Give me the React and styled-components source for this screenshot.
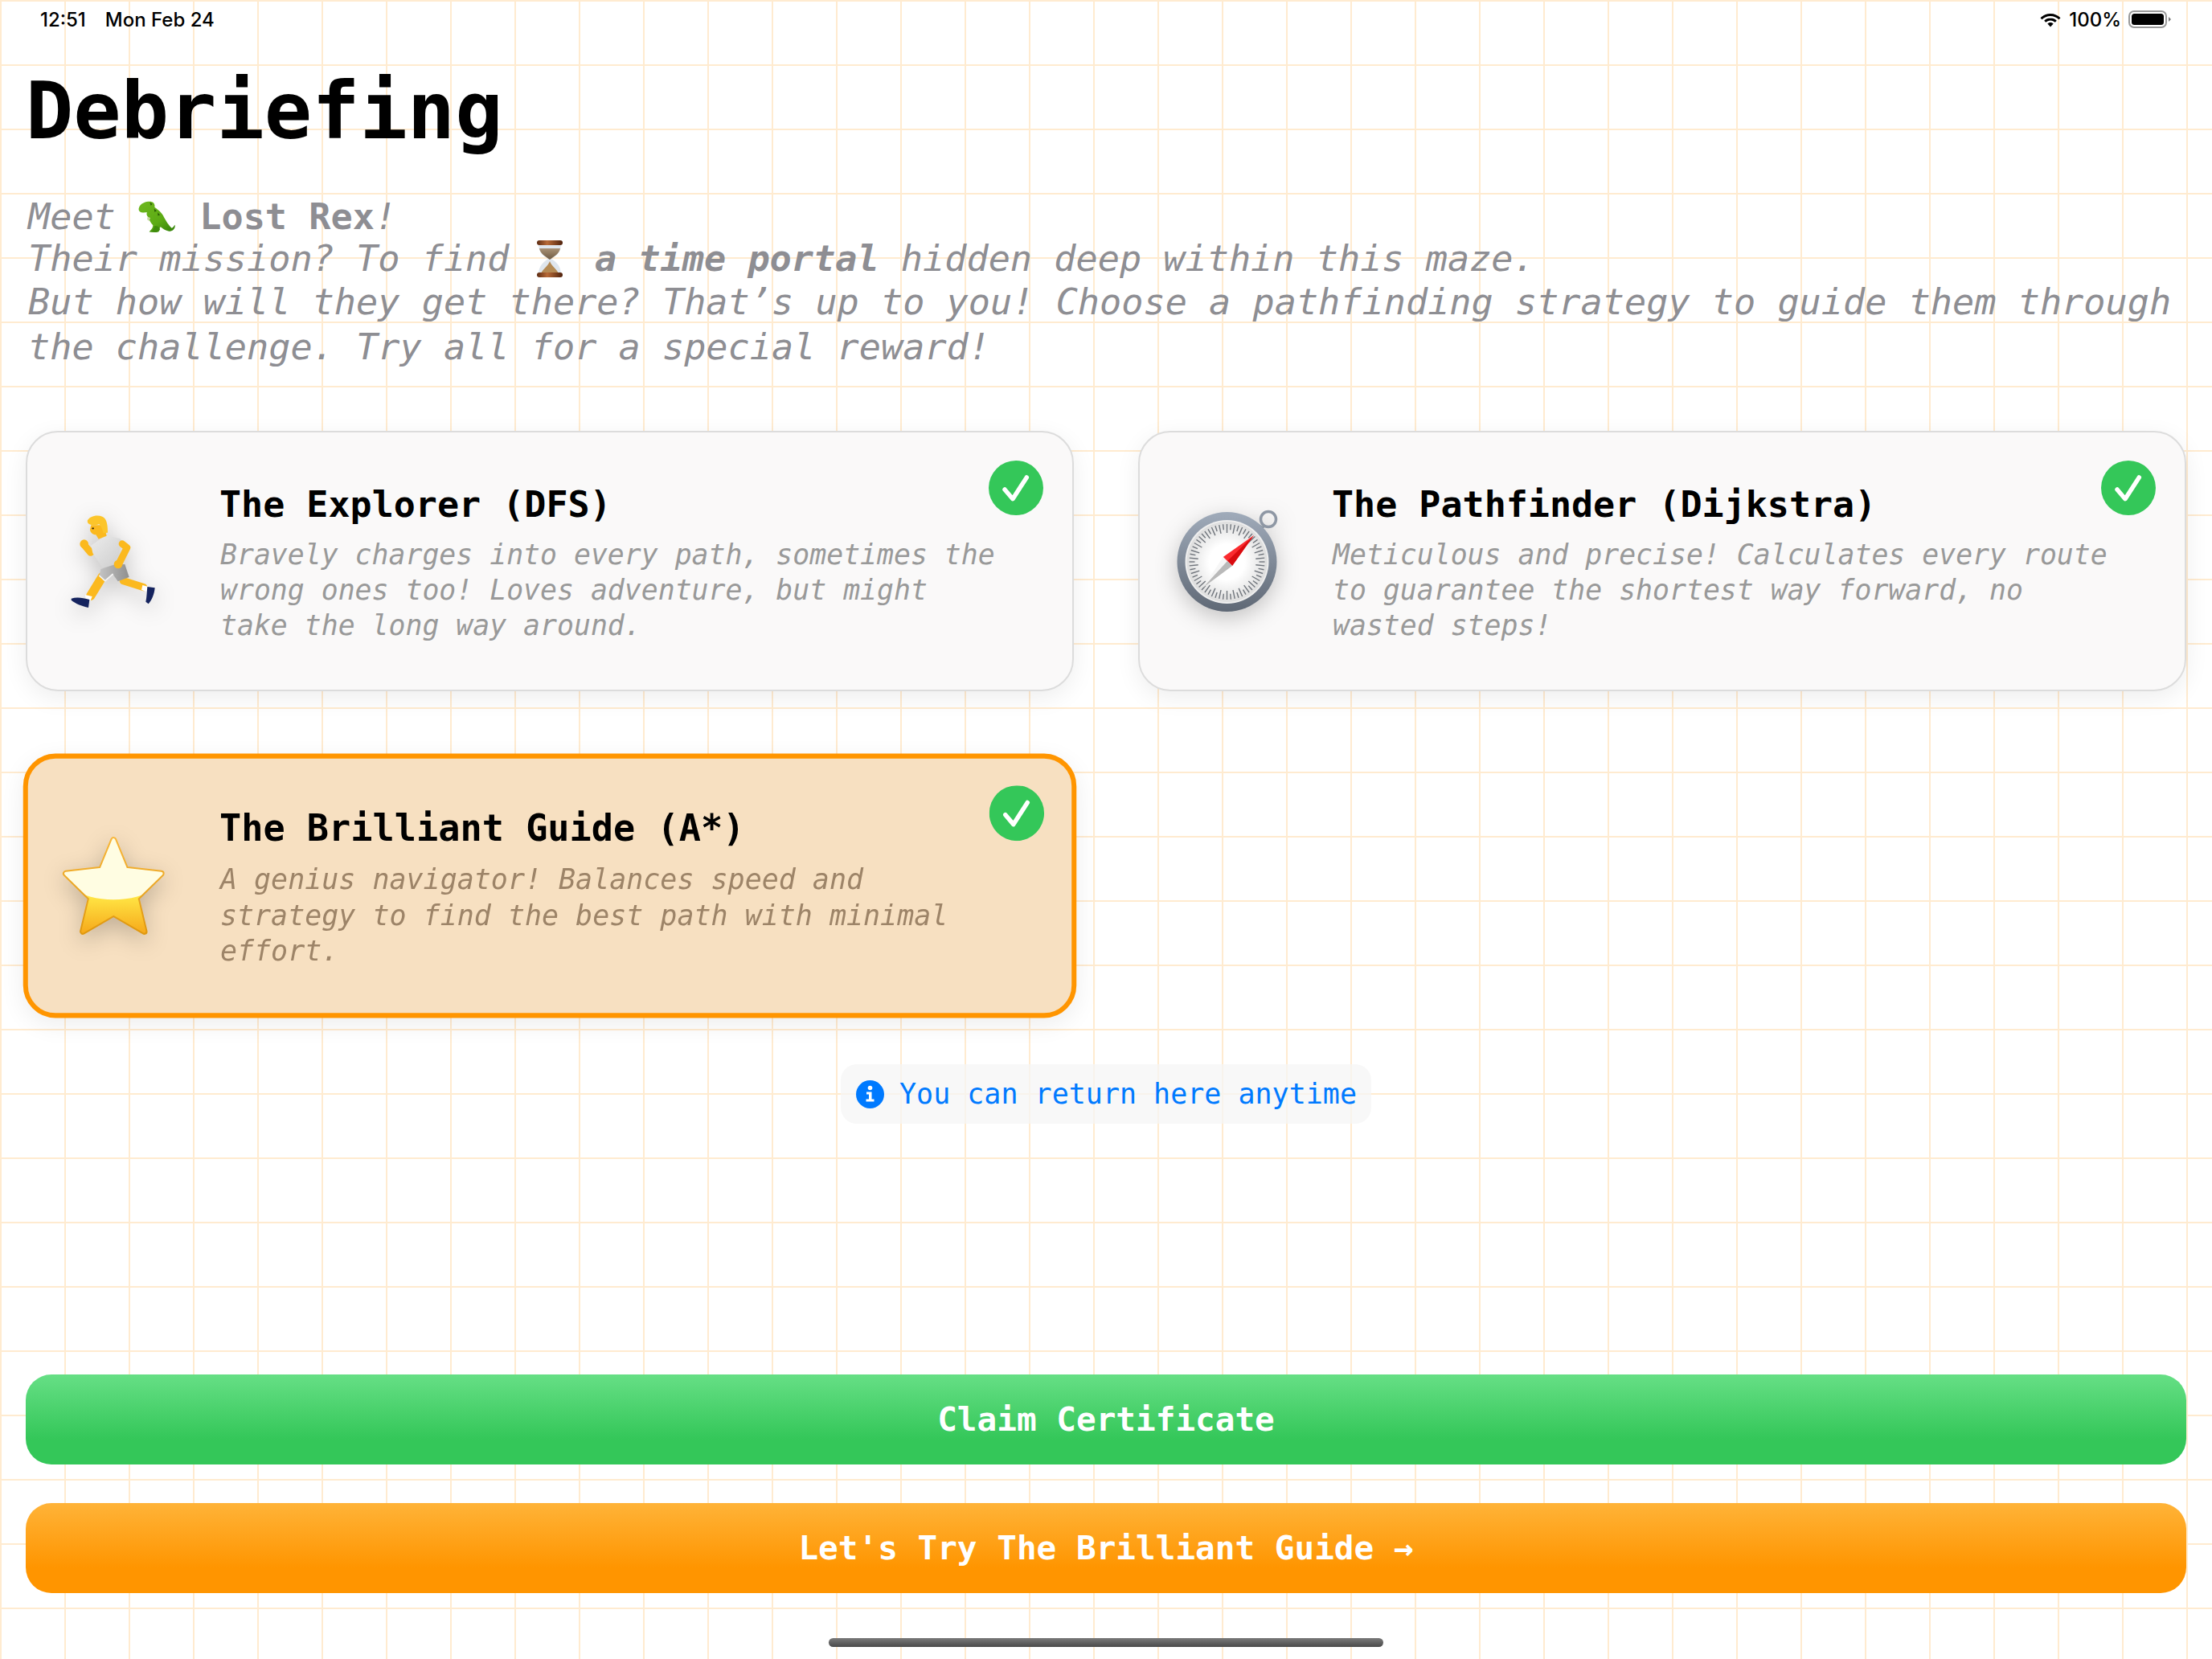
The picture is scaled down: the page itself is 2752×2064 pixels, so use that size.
import React from 'react';
import styled, { createGlobalStyle } from 'styled-components';

const GlobalStyle = createGlobalStyle`
  html, body {
    margin: 0;
    padding: 0;
    background: #fff;
  }
`;

const Page = styled.div`
  position: relative;
  box-sizing: border-box;
  width: 2752px;
  height: 2064px;
  padding: 0 32px 82px;
  display: flex;
  flex-direction: column;
  overflow: hidden;
  font-family: "DejaVu Sans Mono", "Liberation Mono", monospace;
  background-color: #fff;
  background-image:
    linear-gradient(to right, #ffebd0 2px, transparent 2px),
    linear-gradient(to bottom, #ffebd0 2px, transparent 2px);
  background-size: 80px 80px;
`;

const StatusBar = styled.div`
  height: 48px;
  margin: 0 18px 0 18px;
  display: flex;
  align-items: center;
  justify-content: space-between;
  font-family: Inter, "Liberation Sans", sans-serif;
  font-size: 24px;
  font-weight: 500;
  color: #000;
`;

const StatusLeft = styled.div`
  display: flex;
  gap: 24px;
`;

const StatusRight = styled.div`
  display: flex;
  align-items: center;
  gap: 9px;
`;

const Title = styled.h1`
  margin: 25px 0 0;
  height: 130px;
  font-size: 98.6px;
  line-height: 130px;
  font-weight: 700;
  color: #000;
`;

const Hero = styled.div`
  margin: 41px 0 0 3px;
  font-size: 45.2px;
  font-style: italic;
  color: #8e8e93;
`;

const HeroLine = styled.div`
  height: 52px;
  line-height: 52px;
  white-space: nowrap;
`;

const HeroWrap = styled.div`
  line-height: 56px;
`;

const Strong = styled.b`
  font-weight: 700;
  font-style: ${p => (p.$upright ? 'normal' : 'italic')};
`;

const InlineEmoji = styled.svg`
  display: inline-block;
  vertical-align: ${p => p.$drop}px;
`;

const CardGrid = styled.div`
  margin-top: 76px;
  display: grid;
  grid-template-columns: 1304px 1304px;
  column-gap: 80px;
  row-gap: 80px;
`;

const Card = styled.div`
  position: relative;
  box-sizing: border-box;
  height: 324px;
  padding-left: ${p => (p.$selected ? '34px' : '36px')};
  display: flex;
  align-items: center;
  border-radius: 40px;
  border: ${p => (p.$selected ? '6px solid #ff9500' : '2px solid #dcdcdc')};
  background: ${p => (p.$selected ? '#f7e0c1' : '#faf9f9')};
  box-shadow: 0 8px 30px rgba(0, 0, 0, 0.07);
  transform: ${p => (p.$selected ? 'scale(1.005, 1.015)' : 'none')};
`;

const CardIcon = styled.svg`
  flex: none;
  width: 140px;
  height: 140px;
  overflow: visible;
  filter: drop-shadow(0 8px 14px rgba(0, 0, 0, 0.22));
`;

const CardBody = styled.div`
  margin-left: 64px;
  padding-top: 4px;
  width: 970px;
`;

const CardTitle = styled.div`
  margin-left: -1px;
  font-size: 45px;
  line-height: 56px;
  font-weight: 700;
  color: #000;
`;

const CardText = styled.div`
  margin-top: 12px;
  font-size: 34.8px;
  line-height: 44px;
  font-style: italic;
  color: ${p => (p.$selected ? '#9d8468' : '#999999')};
`;

const CheckBadge = styled.svg`
  position: absolute;
  top: ${p => (p.$selected ? '33px' : '35px')};
  right: ${p => (p.$selected ? '34px' : '36px')};
  width: 68px;
  height: 68px;
`;

const NoteRow = styled.div`
  margin-top: 60px;
  display: flex;
  justify-content: center;
`;

const Note = styled.div`
  box-sizing: border-box;
  height: 74px;
  padding: 0 18px 0 19px;
  display: flex;
  align-items: center;
  gap: 19px;
  border-radius: 20px;
  background: rgba(246, 246, 246, 0.75);
  font-size: 35px;
  font-weight: 500;
  color: #007aff;
`;

const Actions = styled.div`
  margin-top: auto;
  display: flex;
  flex-direction: column;
  gap: 48px;
`;

const ActionButton = styled.button`
  height: 112px;
  border: none;
  border-radius: 32px;
  padding: 0;
  font-family: inherit;
  font-size: 41px;
  font-weight: 700;
  color: #fff;
  background: linear-gradient(180deg, ${p => p.$from} 0%, ${p => p.$to} 72%);
`;

const HomeBar = styled.div`
  position: absolute;
  left: 1031px;
  bottom: 15px;
  width: 690px;
  height: 11px;
  border-radius: 6px;
  background: linear-gradient(180deg, #7a7a7a, #4a4a4a);
`;

const Wifi = () => (
  <svg width="28" height="20" viewBox="0 0 28 20">
    <path d="M14 3C9 3 4.800 5 1.500 8.200L3.500 10.300C6.200 7.600 9.900 6 14 6s7.800 1.600 10.500 4.300l2-2.100C23.200 5 19 3 14 3z" fill="#000" />
    <path d="M14 8.500c-3 0-5.800 1.200-7.800 3.200l2 2.100c1.500-1.500 3.500-2.400 5.800-2.400s4.300.9 5.800 2.400l2-2.100c-2-2-4.800-3.200-7.800-3.200z" fill="#000" />
    <path d="M14 14c-1.500 0-2.800.6-3.700 1.500L14 19.500l3.700-4C16.800 14.600 15.500 14 14 14z" fill="#000" />
  </svg>
);

const Battery = () => (
  <svg width="54" height="24" viewBox="0 0 54 24">
    <rect x="1" y="2" width="46" height="20" rx="6" fill="none" stroke="#999" strokeWidth="2" />
    <rect x="4" y="5" width="40" height="14" rx="3.500" fill="#000" />
    <path d="M50 9l3 3-3 3z" fill="#777" />
  </svg>
);

const Dino = () => (
  <InlineEmoji $drop={-8} width="50" height="46" viewBox="30 20 150 138">
    <defs>
      <linearGradient id="dinoSkin" x1="0" y1="0" x2="1" y2="1">
        <stop offset="0" stopColor="#6fb81e" />
        <stop offset="0.6" stopColor="#5cab14" />
        <stop offset="1" stopColor="#2f7d08" />
      </linearGradient>
    </defs>
    <path
      d="M36 54C40 40 56 31 76 31C90 31 96 40 94 52C104 60 118 68 126 84C136 104 148 122 158 130C164 128 166 122 170 118C172 132 162 144 148 142C134 140 124 132 116 126C112 132 108 136 110 144L96 146L74 144C82 136 88 130 88 120C78 110 74 100 72 90C66 88 62 78 66 72C56 72 44 74 38 68C34 64 34 58 36 54Z"
      fill="url(#dinoSkin)"
    />
    <path d="M76 34l10 6-6 6z M92 58l10 8-8 4z M106 72l8 10-8 2z" fill="#2a5c06" />
    <path d="M68 88l10 4-4 12-8-6z" fill="#c7d9a0" />
    <path d="M94 122c10 0 18 4 20 12c0 6-8 12-18 12L74 144c8-2 14-6 16-12z" fill="#3f8c0c" />
  </InlineEmoji>
);

const Hourglass = () => (
  <InlineEmoji $drop={-9} width="52" height="48" viewBox="0 0 52 48">
    <defs>
      <linearGradient id="glassWood" x1="0" y1="0" x2="1" y2="0">
        <stop offset="0" stopColor="#5c2b12" />
        <stop offset="0.4" stopColor="#b86a38" />
        <stop offset="1" stopColor="#4f220d" />
      </linearGradient>
      <linearGradient id="glassSand" x1="0" y1="0" x2="0" y2="1">
        <stop offset="0" stopColor="#a99276" />
        <stop offset="1" stopColor="#6f5a42" />
      </linearGradient>
    </defs>
    <path d="M9 6C9 16 15 20 21 24C15 28 9 33 9 43H37C37 33 31 28 25 24C31 20 37 16 37 6Z" fill="#dfe6ee" />
    <path d="M10 11C11 17 16 20 23 25C30 20 35 17 36 11Z" fill="url(#glassSand)" />
    <path d="M12 42C15 36 21 33 23 27C25 33 31 36 34 42Z" fill="#b48a55" />
    <rect x="7" y="1" width="32" height="6" rx="3" fill="url(#glassWood)" />
    <rect x="7" y="41" width="32" height="6" rx="3" fill="url(#glassWood)" />
  </InlineEmoji>
);

const Runner = () => (
  <CardIcon viewBox="0 0 420 420">
    <defs>
      <linearGradient id="runShirt" x1="0" y1="0" x2="1" y2="1">
        <stop offset="0" stopColor="#ececec" />
        <stop offset="1" stopColor="#cdcdcd" />
      </linearGradient>
      <linearGradient id="runShorts" x1="0" y1="0" x2="1" y2="0">
        <stop offset="0" stopColor="#c4c4c4" />
        <stop offset="1" stopColor="#8f8f8f" />
      </linearGradient>
    </defs>
    <g fill="none" strokeLinecap="round" strokeLinejoin="round">
      <path d="M172 268L128 340" stroke="#fbb91f" strokeWidth="34" />
      <path d="M250 284L326 308" stroke="#fbb91f" strokeWidth="28" />
      <path d="M106 152L128 178L152 162" stroke="#fbb91f" strokeWidth="26" />
    </g>
    <path d="M108 336L134 342L128 358L110 352Z" fill="#fff" />
    <path d="M322 300L344 306L336 324L318 318Z" fill="#fff" />
    <path d="M56 350C74 344 98 346 124 354L120 384C94 378 70 368 56 356Z" fill="#15235e" />
    <path d="M340 306L368 310C366 334 356 358 344 370L334 362C338 344 338 326 340 306Z" fill="#15235e" />
    <path d="M130 152L186 113L238 126C246 132 246 146 240 160L226 214L212 226L172 234L136 180Z" fill="url(#runShirt)" />
    <path d="M166 240L214 224L256 222L272 270L230 286L212 260L182 286L160 266Z" fill="url(#runShorts)" />
    <path d="M160 264L182 284L212 258" fill="none" stroke="#f4f4f4" strokeWidth="5" />
    <path d="M246 146L264 160L236 216" fill="none" stroke="#fbb91f" strokeWidth="26" strokeLinecap="round" strokeLinejoin="round" />
    <circle cx="104" cy="146" r="16" fill="#fbb91f" />
    <circle cx="231" cy="222" r="16" fill="#fbb91f" />
    <path d="M130 76H178L188 116L158 128L148 112C136 112 126 102 126 92Z" fill="#fbb91f" />
    <path d="M116 60C124 42 152 36 172 44C190 52 192 78 192 104L176 106C172 92 168 80 160 72C148 78 128 78 118 68Z" fill="#fcc52a" />
    <circle cx="137" cy="88" r="3.500" fill="#3a2408" />
  </CardIcon>
);

const ticks = Array.from({ length: 60 }, (_, i) => i * 6);

const Compass = () => (
  <CardIcon viewBox="0 0 140 140">
    <defs>
      <linearGradient id="compassRim" x1="0" y1="0" x2="0" y2="1">
        <stop offset="0" stopColor="#a0abba" />
        <stop offset="1" stopColor="#5f6875" />
      </linearGradient>
      <radialGradient id="compassFace" cx="0.5" cy="0.5" r="0.55">
        <stop offset="0.4" stopColor="#ffffff" />
        <stop offset="1" stopColor="#d8d8d8" />
      </radialGradient>
    </defs>
    <circle cx="124" cy="18" r="9.500" fill="none" stroke="#8e97a4" strokeWidth="3.500" />
    <path d="M112 24L119 28L114 34L107 30Z" fill="#7c8592" />
    <circle cx="72.500" cy="71" r="62" fill="url(#compassRim)" />
    <circle cx="72.500" cy="71" r="52" fill="#efefef" />
    <circle cx="72.500" cy="71" r="50" fill="url(#compassFace)" />
    {ticks.map(a => (
      <line
        key={a}
        x1="72.500"
        y1="24"
        x2="72.500"
        y2={a % 12 === 0 ? 35 : 31}
        stroke="#70757c"
        strokeWidth="1.400"
        transform={`rotate(${a} 72.500 71)`}
      />
    ))}
    <path d="M106 38L67.700 65L79 76Z" fill="#fa2b2f" />
    <path d="M106 38L79 76L73 70Z" fill="#d90b0f" />
    <path d="M67.700 65L79 76L42.700 103Z" fill="#f6f6f6" />
    <path d="M79 76L73 70L42.700 103Z" fill="#b9b9b9" />
  </CardIcon>
);

const starPoints = '72,14 87,50 131,55 100,85 110,126 72,104 34,126 44,85 13,55 57,50';

const Star = () => (
  <CardIcon viewBox="0 0 140 140">
    <defs>
      <linearGradient id="starEdge" x1="0" y1="0" x2="0" y2="1">
        <stop offset="0" stopColor="#f8b63a" />
        <stop offset="1" stopColor="#df980f" />
      </linearGradient>
      <linearGradient id="starFill" x1="0" y1="84" x2="0" y2="128" gradientUnits="userSpaceOnUse">
        <stop offset="0" stopColor="#ffe443" />
        <stop offset="1" stopColor="#f6a91b" />
      </linearGradient>
      <mask id="starInner" maskUnits="userSpaceOnUse" x="0" y="0" width="140" height="140">
        <polygon points={starPoints} fill="#fff" stroke="#fff" strokeWidth="4" strokeLinejoin="round" />
      </mask>
    </defs>
    <polygon
      points={starPoints}
      fill="url(#starEdge)"
      stroke="url(#starEdge)"
      strokeWidth="8"
      strokeLinejoin="round"
    />
    <g mask="url(#starInner)">
      <rect x="0" y="0" width="140" height="140" fill="url(#starFill)" />
      <ellipse cx="72" cy="38" rx="76" ry="49" fill="#fffde2" />
    </g>
  </CardIcon>
);

const Check = ({ selected }) => (
  <CheckBadge $selected={selected} viewBox="0 0 68 68">
    <circle cx="34" cy="34" r="34" fill="#34c759" />
    <path d="M20 36L30 47.700L47.300 21" fill="none" stroke="#fff" strokeWidth="5.500" strokeLinecap="round" strokeLinejoin="round" />
  </CheckBadge>
);

const InfoIcon = () => (
  <svg width="35" height="35" viewBox="0 0 35 35">
    <circle cx="17.500" cy="17.500" r="17.500" fill="#007aff" />
    <circle cx="17.500" cy="9.500" r="2.800" fill="#fff" />
    <path d="M13 14.500h6.500v9H22.500v3h-10v-3h3.500v-6H13z" fill="#fff" />
  </svg>
);

const strategies = [
  {
    icon: <Runner />,
    title: 'The Explorer (DFS)',
    text: 'Bravely charges into every path, sometimes the wrong ones too! Loves adventure, but might take the long way around.',
  },
  {
    icon: <Compass />,
    title: 'The Pathfinder (Dijkstra)',
    text: 'Meticulous and precise! Calculates every route to guarantee the shortest way forward, no wasted steps!',
  },
  {
    icon: <Star />,
    title: 'The Brilliant Guide (A*)',
    text: 'A genius navigator! Balances speed and strategy to find the best path with minimal effort.',
    selected: true,
  },
];

const App = () => {
  return (
    <Page>
      <GlobalStyle />
      <StatusBar>
        <StatusLeft>
          <span>12:51</span>
          <span>Mon Feb 24</span>
        </StatusLeft>
        <StatusRight>
          <Wifi />
          <span>100%</span>
          <Battery />
        </StatusRight>
      </StatusBar>
      <Title>Debriefing</Title>
      <Hero>
        <HeroLine>
          Meet <Dino /> <Strong $upright>Lost Rex</Strong>!
        </HeroLine>
        <HeroLine>
          Their mission? To find <Hourglass /> <Strong>a time portal</Strong> hidden deep within this maze.
        </HeroLine>
        <HeroWrap>
          But how will they get there? That’s up to you! Choose a pathfinding strategy to guide them through the challenge. Try all for a special reward!
        </HeroWrap>
      </Hero>
      <CardGrid>
        {strategies.map(s => (
          <Card key={s.title} $selected={s.selected}>
            {s.icon}
            <CardBody>
              <CardTitle>{s.title}</CardTitle>
              <CardText $selected={s.selected}>{s.text}</CardText>
            </CardBody>
            <Check selected={s.selected} />
          </Card>
        ))}
      </CardGrid>
      <NoteRow>
        <Note>
          <InfoIcon />
          You can return here anytime
        </Note>
      </NoteRow>
      <Actions>
        <ActionButton $from="#66df85" $to="#34c759">Claim Certificate</ActionButton>
        <ActionButton $from="#ffb338" $to="#ff9500">Let's Try The Brilliant Guide →</ActionButton>
      </Actions>
      <HomeBar />
    </Page>
  );
};

export default App;
